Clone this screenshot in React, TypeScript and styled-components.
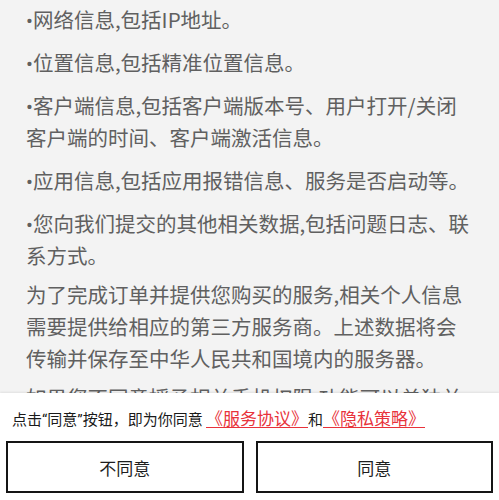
import React from 'react'
import styled, { createGlobalStyle } from 'styled-components'

const GlobalStyle = createGlobalStyle`
	html, body {
		margin: 0;
		padding: 0;
		background: #f3f3f3;
	}
	* {
		box-sizing: border-box;
	}
`

const Page = styled.div`
	display: flex;
	flex-direction: column;
	width: 499px;
	height: 500px;
	overflow: hidden;
	font-family: 'Noto Sans CJK SC', 'Noto Sans', sans-serif;
`

const Content = styled.div`
	flex: 1;
	overflow: hidden;
	padding: 3px 27px 0 26px;
	background: #f3f3f3;
	color: #606060;
	font-size: 20.5px;
	line-height: 32px;
`

const Para = styled.p<{ $gap?: number }>`
	margin: 0 0 ${({ $gap }) => $gap ?? 11}px;
`

// latin glyphs (bullet, quotes) stay narrow like in the original
const Latin = styled.span`
	font-family: Roboto, 'Noto Sans CJK SC', sans-serif;
	line-height: 0;
`

const Panel = styled.div`
	flex: 0 0 107px;
	display: flex;
	flex-direction: column;
	background: #ffffff;
	box-shadow: 0 -1px 2px rgba(0, 0, 0, 0.08);
	padding: 16px 6px 7px;
`

const Agreement = styled.div`
	padding-left: 6px;
	font-size: 15px;
	line-height: 20px;
	color: #1a1a1a;
	white-space: nowrap;
`

const Link = styled.span`
	display: inline-block;
	font-size: 17px;
	line-height: 18px;
	color: #e8323a;
	border-bottom: 1px solid #e8323a;
`

const Buttons = styled.div`
	display: flex;
	gap: 12px;
	margin-top: auto;
`

const Button = styled.button`
	flex: 1;
	height: 52px;
	background: #ffffff;
	border: 2px solid #151515;
	border-radius: 0;
	font-family: 'Noto Sans CJK SC', sans-serif;
	font-size: 17px;
	color: #1e1e1e;
	padding: 0;
`

const bullets = [
	'网络信息,包括IP地址。',
	'位置信息,包括精准位置信息。',
	'客户端信息,包括客户端版本号、用户打开/关闭客户端的时间、客户端激活信息。',
	'应用信息,包括应用报错信息、服务是否启动等。',
	'您向我们提交的其他相关数据,包括问题日志、联系方式。',
]

const App = () => (
	<Page>
		<GlobalStyle />
		<Content>
			{bullets.map((text, i) => (
				<Para key={text} $gap={i === bullets.length - 1 ? 7 : 11}>
					<Latin>•</Latin>
					{text}
				</Para>
			))}
			<Para $gap={7}>
				为了完成订单并提供您购买的服务,相关个人信息需要提供给相应的第三方服务商。上述数据将会传输并保存至中华人民共和国境内的服务器。
			</Para>
			<Para>如果您不同意授予相关手机权限,功能可以单独关闭。</Para>
		</Content>
		<Panel>
			<Agreement>
				点击<Latin>“</Latin>同意<Latin>”</Latin>按钮，即为你同意 <Link>《服务协议》</Link>和
				<Link>《隐私策略》</Link>
			</Agreement>
			<Buttons>
				<Button>不同意</Button>
				<Button>同意</Button>
			</Buttons>
		</Panel>
	</Page>
)

export default App
